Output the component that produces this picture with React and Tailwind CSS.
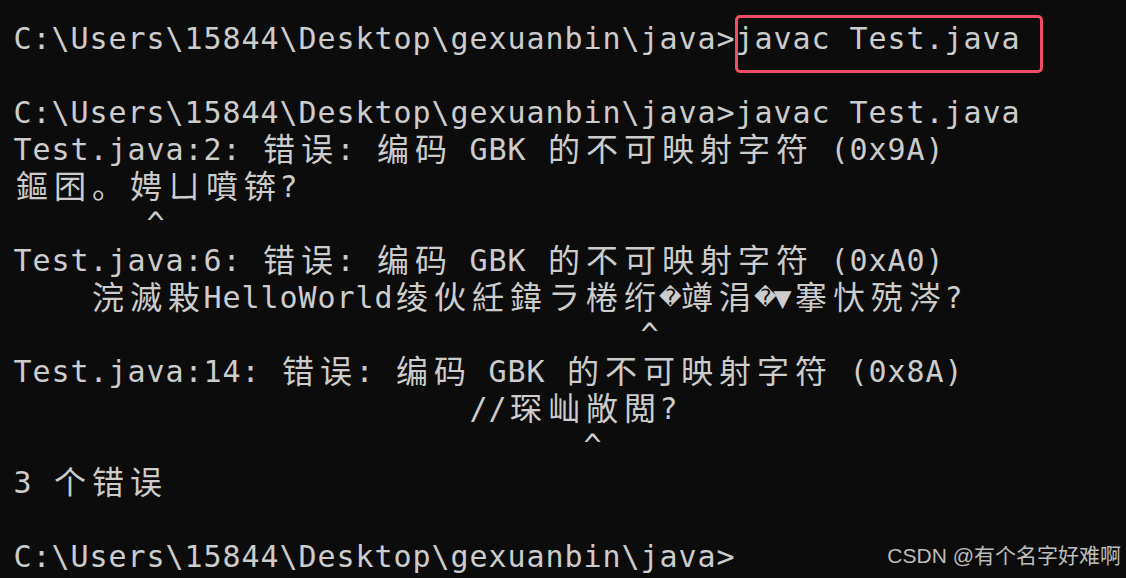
import React from 'react';

const lines = [
  'C:\\Users\\15844\\Desktop\\gexuanbin\\java>javac Test.java',
  '',
  'C:\\Users\\15844\\Desktop\\gexuanbin\\java>javac Test.java',
  'Test.java:2: 错误: 编码 GBK 的不可映射字符 (0x9A)',
  '鏂囨。娉ㄩ噴锛?',
  '       ^',
  'Test.java:6: 错误: 编码 GBK 的不可映射字符 (0xA0)',
  '    浣滅敤HelloWorld绫伙紝鍏ラ棬绗\uFFFD竴涓\uFFFD▼搴忕殑涔?',
  ' '.repeat(33) + '^',
  'Test.java:14: 错误: 编码 GBK 的不可映射字符 (0x8A)',
  ' '.repeat(24) + '//琛屾敞閲?',
  ' '.repeat(30) + '^',
  '3 个错误',
  '',
  'C:\\Users\\15844\\Desktop\\gexuanbin\\java>',
];

// terminal cells: CJK takes two columns, everything else one
const isWide = (ch) => {
  const c = ch.codePointAt(0);
  return c >= 0x2e80 && c !== 0xfffd && !(c >= 0xff61 && c <= 0xffdc);
};

const Cell = ({ ch }) => {
  if (ch === ' ') return <span className="w-[19px] h-[37px] shrink-0" />;
  if (isWide(ch)) {
    return (
      <span className="w-[38px] h-[37px] shrink-0 text-center text-[32px] leading-[33px] font-['Noto_Sans_CJK_SC',sans-serif]">
        {ch}
      </span>
    );
  }
  if (ch === '\uFFFD') {
    return (
      <span className="w-[19px] h-[37px] shrink-0 text-center text-[22px] leading-[37px] font-['DejaVu_Sans',sans-serif]">
        {ch}
      </span>
    );
  }
  return (
    <span className="w-[19px] h-[37px] shrink-0 text-center text-[30px] leading-[37px] font-['DejaVu_Sans_Mono',monospace]">
      {ch}
    </span>
  );
};

const Line = ({ text }) => (
  <div className="flex h-[37px]">
    {Array.from(text).map((ch, i) => (
      <Cell key={i} ch={ch} />
    ))}
  </div>
);

export default function App() {
  return (
    <div className="relative w-[1126px] h-[578px] overflow-hidden bg-[#0c0c0c] text-[#cccccc] pl-[13px] pt-[20px]">
      {lines.map((t, i) => (
        <Line key={i} text={t} />
      ))}

      <div className="absolute left-[735px] top-[15px] w-[308px] h-[58px] border-[3px] border-[#ef4d64] rounded-[5px]" />

      <div className="absolute right-[5px] bottom-[7px] text-[21px] leading-[30px] text-[#bdbdbd] font-['Liberation_Sans','Noto_Sans_CJK_SC',sans-serif]">
        CSDN @有个名字好难啊
      </div>
    </div>
  );
}
